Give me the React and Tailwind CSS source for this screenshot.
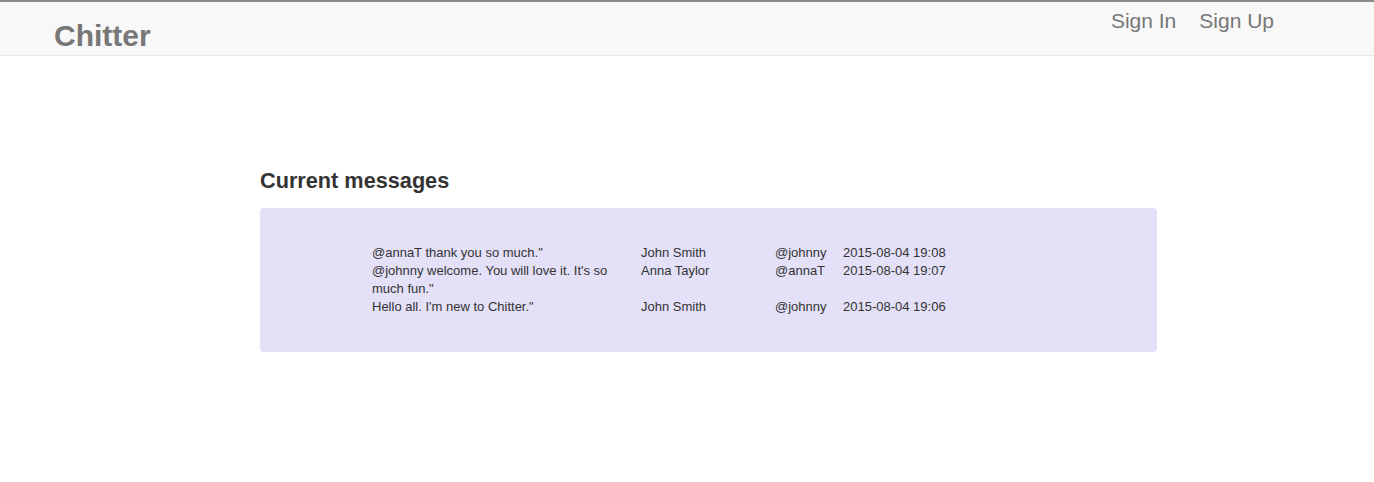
import React from 'react';

const messages = [
    { text: '@annaT thank you so much."', name: 'John Smith', handle: '@johnny', time: '2015-08-04 19:08' },
    { text: '@johnny welcome. You will love it. It\'s so much fun."', name: 'Anna Taylor', handle: '@annaT', time: '2015-08-04 19:07' },
    { text: 'Hello all. I\'m new to Chitter."', name: 'John Smith', handle: '@johnny', time: '2015-08-04 19:06' },
];

const App = () => {
    return (
        <div className="min-h-[482px] bg-white font-['Liberation_Sans',Arial,sans-serif] text-[#333]">
            {/* Navbar */}
            <div className="h-[56px] bg-[#f8f8f8] border-t-2 border-t-[#8c8c8c] border-b border-b-[#e7e7e7] flex justify-between">
                <div className="pl-[54px] pt-[16px] text-[30px] font-bold leading-[36px] text-[#777]">Chitter</div>
                <div className="flex gap-[23px] pr-[100px] pt-[6px] text-[21px] leading-[26px] text-[#777]">
                    <span>Sign In</span>
                    <span>Sign Up</span>
                </div>
            </div>

            {/* Content */}
            <div className="w-[897px] ml-[260px] pt-[112px]">
                <h3 className="text-[21.7px] font-bold leading-[26px] text-[#333] mb-[14px]">Current messages</h3>
                <div className="bg-[#e3e0f7] rounded-[4px] pl-[112px] py-[36px] h-[144px]">
                    <table className="text-[13px] leading-[18px] text-[#333] border-collapse">
                        <tbody>
                            {messages.map((m, i) => (
                                <tr key={i} className="align-top">
                                    <td className="w-[269px] pr-[20px]">{m.text}</td>
                                    <td className="w-[134px]">{m.name}</td>
                                    <td className="w-[68px]">{m.handle}</td>
                                    <td>{m.time}</td>
                                </tr>
                            ))}
                        </tbody>
                    </table>
                </div>
            </div>
        </div>
    );
};

export default App;
